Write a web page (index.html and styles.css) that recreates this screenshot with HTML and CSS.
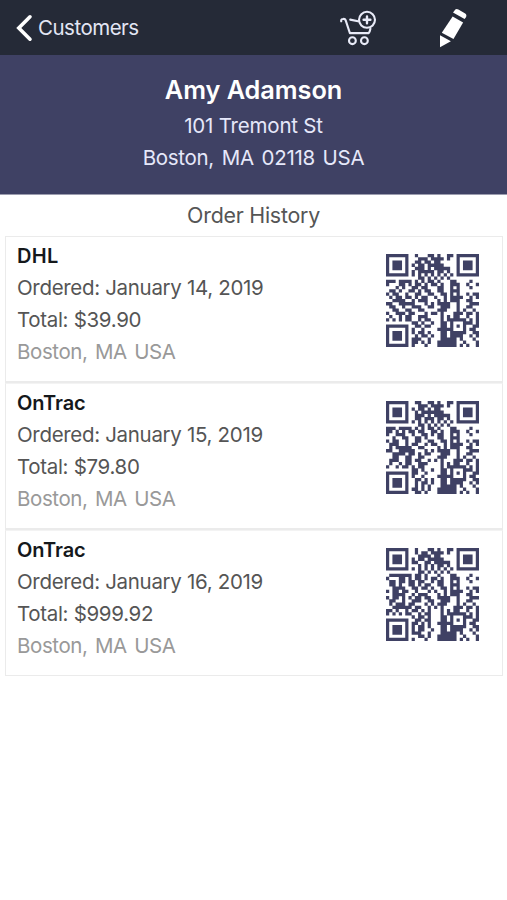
FILE: index.html
```html
<!DOCTYPE html>
<html lang="en">
<head>
  <meta charset="UTF-8" />
  <meta name="viewport" content="width=device-width, initial-scale=1" />
  <title>Amy Adamson - Order History</title>
  <link rel="stylesheet" href="styles.css">
</head>
<body>

  <header class="navbar">
    <a class="back">
      <svg width="18" height="28" viewBox="0 0 18 28"><path d="M14 2.8L2.8 14 14 25.2" fill="none" stroke="#fff" stroke-width="3.6" stroke-linecap="round"/></svg>
      <span>Customers</span>
    </a>
    <div class="actions">
      <svg width="38" height="36" viewBox="0 0 38 36" fill="none" stroke="#e9ebf8" stroke-width="2.1" stroke-linecap="round" stroke-linejoin="round">
        <path d="M1.2 11.3q-.3-2.3 1.8-2.3 2-.4 2.6 1.2l4.3 12.9h18.8q1.2-1.4 1.7-4.3"/>
        <path d="M10.2 9.6l7.8 1.7"/>
        <circle cx="27" cy="9.8" r="8"/>
        <path d="M27 6.4v6.8M23.6 9.8h6.8" stroke-width="2.4"/>
        <circle cx="12.4" cy="30.7" r="3.4"/>
        <circle cx="24.4" cy="30.7" r="3.4"/>
      </svg>
      <svg width="30" height="40" viewBox="0 0 30 40" fill="#fff">
        <path d="M15.2 3q1.5-2.9 4.2-1.4l6.4 3.7q2.6 1.6 1 4.2L25.6 11 14 4.4z"/>
        <path d="M13.6 8.4l10.5 6.1-9.6 16.4L2.8 24.8z"/>
        <path d="M1 27.3l10.9 6L1 39.2z"/>
      </svg>
    </div>
  </header>

  <section class="customer">
    <h1>Amy Adamson</h1>
    <p class="street">101 Tremont St</p>
    <p class="city">Boston, MA 02118 USA</p>
  </section>

  <h2 class="history-title">Order History</h2>

  <main class="orders">
    <article class="order">
      <div class="order-info">
        <h3 class="dhl">DHL</h3>
        <p class="date">Ordered: January 14, 2019</p>
        <p class="total">Total: $39.90</p>
        <p class="place">Boston, MA USA</p>
      </div>
      <svg class="qr" viewBox="0 0 29 29"></svg>
    </article>
    <article class="order">
      <div class="order-info">
        <h3>OnTrac</h3>
        <p class="date">Ordered: January 15, 2019</p>
        <p class="total">Total: $79.80</p>
        <p class="place">Boston, MA USA</p>
      </div>
      <svg class="qr" viewBox="0 0 29 29"></svg>
    </article>
    <article class="order">
      <div class="order-info">
        <h3>OnTrac</h3>
        <p class="date">Ordered: January 16, 2019</p>
        <p class="total">Total: $999.92</p>
        <p class="place">Boston, MA USA</p>
      </div>
      <svg class="qr" viewBox="0 0 29 29"></svg>
    </article>
  </main>

  <script src="qr.js"></script>
</body>
</html>
```
FILE: styles.css
```css
* {
  box-sizing: border-box;
}
body {
  margin: 0;
  background: #fff;
  color: #555;
  font-family: Inter, "Liberation Sans", sans-serif;
  font-size: 20.5px;
  letter-spacing: -0.32px;
  line-height: 32px;
}
h1, h2, h3, p {
  margin: 0;
  white-space: nowrap;
}
.navbar {
  display: flex;
  justify-content: space-between;
  align-items: center;
  height: 55px;
  padding: 0 38px 0 16px;
  background: #252a37;
}
.back {
  display: flex;
  align-items: center;
  gap: 4px;
  color: #e3e6f4;
  letter-spacing: -0.5px;
}
.actions {
  display: flex;
  align-items: center;
  gap: 61px;
}
.customer {
  height: 140px;
  padding-top: 17px;
  background: #3f4164;
  border-bottom: 1px solid #9c9daf;
  color: #e6e8fa;
  text-align: center;
}
.customer h1 {
  margin-bottom: 3px;
  color: #fff;
  font-size: 25.3px;
  font-weight: 600;
  letter-spacing: -0.05px;
  line-height: 35px;
}
.street {
  letter-spacing: -0.2px;
}
.city {
  word-spacing: 2.4px;
}
.history-title {
  height: 41px;
  padding-top: 4px;
  font-size: 21.4px;
  font-weight: 400;
  letter-spacing: -0.25px;
  text-align: center;
}
.orders {
  padding: 0 4px 0 5px;
}
.order {
  display: flex;
  justify-content: space-between;
  height: 147px;
  padding: 2px 23px 0 11px;
  border: 1px solid #ebebeb;
  border-bottom-width: 2px;
}
.order + .order {
  border-top-color: #f3f3f3;
}
.order:last-child {
  height: 146px;
  border-bottom-width: 1px;
}
.order-info {
  padding-top: 0.6px;
  line-height: 32.2px;
}
.order h3 {
  color: #15181b;
  font-size: 20px;
  font-weight: 600;
  letter-spacing: -0.1px;
}
.order .dhl {
  letter-spacing: 0.3px;
}
.place {
  color: #999;
  letter-spacing: -0.4px;
  word-spacing: 2px;
}
.qr {
  width: 93px;
  height: 93px;
  margin-top: 15px;
  fill: #3f4164;
}
```
FILE: qr.js
```js
// 29x29 module grid, the right part is common to all orders
const base = [
  '#######..#...##.#..##.#######',
  '#.....#...###.####.#..#.....#',
  '#.###.#..##.##.##.....#.###.#',
  '#.###.#.#.##.#####....#.###.#',
  '#.###.#..###.#.#####..#.###.#',
  '#.....#.#.#####.##.#..#.....#',
  '#######.#.#.#.#.#.#.#.#######',
  '..........##.#.#.#.#.........',
  '###.####.#.#.##.#...##....#..',
  '#...##.#.##.#.##.#..###..#..#',
  '...#.#..##.##...##..#.#...#..',
  '.##.#..##.#.##..##..###......',
  '#.##..#..##..##..##.#.#..#.##',
  '.#.##.##.#.##..#..#.####..#.#',
  '..####..#.###...#.#.###..##..',
  '##..#####...#.#.####..#...###',
  '.##..#..###..##..###..#..##..',
  '..##..##..##....###...#.#..#.',
  '#..###.##...#.##.#...###.##.#',
  '.#..#.##..###....#.#.##..#..#',
  '#.#.#.##..#.##...#.######.#.#',
  '........##.#..#..##.#...###.#',
  '#######..##.##...##.#.#.#..##',
  '#.....#.#..#....#####...#.##.',
  '#.###.#.#.##.#...##.#####..##',
  '#.###.#..#.##.#..##.####..#.#',
  '#.###.#.###..#...#####.#...#.',
  '#.....#.##.#.#..######..#...#',
  '#######.#...#...######.#.#..#'
];

// left modules of the rows that differ between orders
const changes = [
  {},
  {
    0: '#######..##..##', 2: '#.###.#.#.##.#.', 3: '#.###.#..#.####', 5: '#.....#..##.###',
    9: '##.#.#.##.##..#', 10: '#..###..#..##.#', 11: '..#..##..##.#..', 13: '.###..#.##..#.#',
    14: '.#.#####..##...', 16: '..####.##.#.##.', 18: '.###..##.##..#.', 20: '#..#.##.#.##...',
    22: '#######.##..#..', 24: '#.###.#..##.#.#', 26: '#.###.#..#.#.#.', 28: '#######..##.#..'
  },
  {
    1: '#.....#..#.##.#', 2: '#.###.#...####.', 4: '#.###.#.##..##.', 5: '#.....#...#.#.#',
    8: '.#######.##.#..', 10: '.##.##.##.##..#', 12: '..####..##.##.#', 13: '#.##.##..#...#.',
    15: '#.##.#.#.##.##.', 17: '.#.###.##...#.#', 18: '..######.##..#.', 19: '##.#..#.##.#.#.',
    21: '........#.##.#.', 23: '#.....#.##.#.#.', 25: '#.###.#.#.##..#', 27: '#.....#...##.#.'
  }
];

document.querySelectorAll('.qr').forEach((svg, n) => {
  let d = '';
  base.forEach((line, y) => {
    const row = changes[n][y] ? changes[n][y] + line.slice(15) : line;
    for (const run of row.matchAll(/#+/g)) {
      d += `M${run.index} ${y}h${run[0].length}v1.03h-${run[0].length}z`;
    }
  });
  svg.innerHTML = `<path d="${d}"/>`;
});
```
